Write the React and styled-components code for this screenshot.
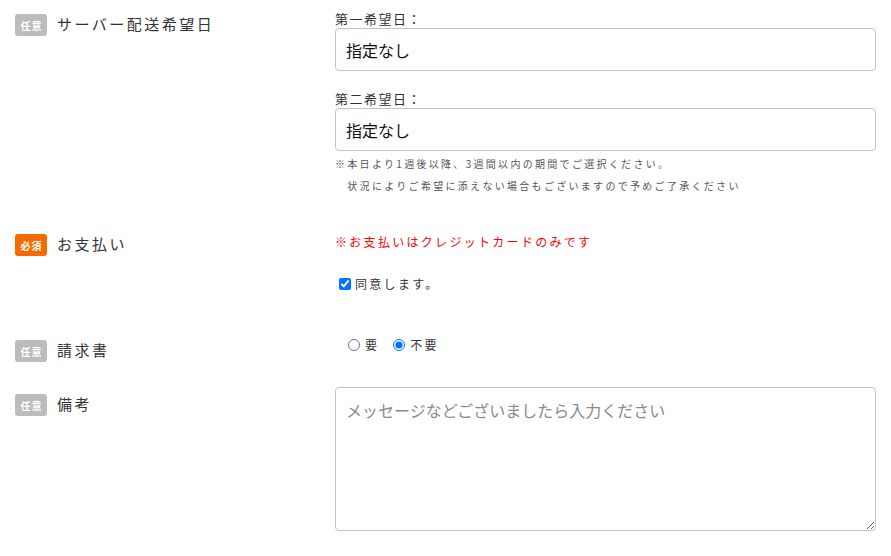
import React from "react";
import styled, { createGlobalStyle } from "styled-components";

const Global = createGlobalStyle`
  html, body { margin: 0; padding: 0; background: #fff; }
  body {
    font-family: "Noto Sans CJK JP", "Noto Sans", sans-serif;
    color: #333;
  }
  * { box-sizing: border-box; }
`;

const Form = styled.div`
  padding: 0 15px;
  width: 891px;
`;

const Row = styled.div`
  display: grid;
  grid-template-columns: 320px 1fr;
  margin-top: ${(p) => p.$top}px;
`;

const LabelCell = styled.div`
  display: flex;
  align-items: center;
  gap: 10px;
  padding-top: ${(p) => p.$pad}px;
  height: fit-content;
`;

const Badge = styled.span`
  display: inline-flex;
  align-items: center;
  justify-content: center;
  width: 32px;
  height: 22px;
  border-radius: 3px;
  background: ${(p) => (p.$required ? "#f56b00" : "#bcbcbc")};
  color: #fff;
  font-size: 10px;
  font-weight: bold;
  letter-spacing: 1px;
  padding-left: 1px;
`;

const LabelText = styled.span`
  font-size: 15px;
  letter-spacing: 2.5px;
  color: #333;
  line-height: 22px;
  margin-top: -3px;
`;

const FieldCell = styled.div`
  padding-top: ${(p) => p.$pad || 0}px;
  display: flex;
  flex-direction: column;
`;

const SubLabel = styled.div`
  font-size: 13px;
  letter-spacing: 1.5px;
  line-height: 18px;
  color: #333;
  margin-top: ${(p) => p.$top || 0}px;
`;

const Select = styled.div`
  height: 43px;
  border: 1px solid #c4c4c4;
  border-radius: 4px;
  padding: 0 10px;
  display: flex;
  align-items: center;
  font-size: 16px;
  color: #111;
`;

const Notes = styled.div`
  margin-top: 2px;
`;

const Note = styled.div`
  font-size: 10px;
  letter-spacing: 2.3px;
  line-height: 22px;
  color: #555;
  white-space: pre;
`;

const Alert = styled.div`
  font-size: 12px;
  letter-spacing: 2.3px;
  line-height: 20px;
  color: #f00;
`;

const CheckLine = styled.label`
  display: flex;
  align-items: center;
  font-size: 12px;
  letter-spacing: 2.3px;
  line-height: 20px;
  color: #333;
  margin-top: ${(p) => p.$top || 0}px;
  input {
    margin: 0 4px 0 4px;
    width: 12px;
    height: 12px;
  }
`;

const RadioGroup = styled.div`
  display: flex;
  align-items: center;
  padding-left: 8px;
  line-height: 20px;
`;

const RadioLabel = styled.label`
  display: flex;
  align-items: center;
  font-size: 12px;
  letter-spacing: 2.3px;
  color: #333;
  margin-right: 9px;
  input {
    margin: 0 5px 0 5px;
    width: 12px;
    height: 12px;
  }
`;

const TextArea = styled.textarea`
  width: 100%;
  height: 144px;
  border: 1px solid #c4c4c4;
  border-radius: 4px;
  padding: 10px;
  font-family: "Noto Sans CJK JP", "Noto Sans", sans-serif;
  font-size: 16px;
  line-height: 24px;
  resize: vertical;
  display: block;
  &::placeholder {
    color: #8a8a8a;
  }
`;

export default function App() {
  return (
    <>
      <Global />
      <Form>
        <Row $top={0}>
          <LabelCell $pad={14}>
            <Badge>任意</Badge>
            <LabelText>サーバー配送希望日</LabelText>
          </LabelCell>
          <FieldCell $pad={10}>
            <SubLabel>第一希望日：</SubLabel>
            <Select>指定なし</Select>
            <SubLabel $top={19}>第二希望日：</SubLabel>
            <Select>指定なし</Select>
            <Notes>
              <Note>※本日より1週後以降、3週間以内の期間でご選択ください。</Note>
              <Note>{"　状況によりご希望に添えない場合もございますので予めご了承ください"}</Note>
            </Notes>
          </FieldCell>
        </Row>
        <Row $top={27}>
          <LabelCell $pad={10}>
            <Badge $required>必須</Badge>
            <LabelText>お支払い</LabelText>
          </LabelCell>
          <FieldCell $pad={8}>
            <Alert>※お支払いはクレジットカードのみです</Alert>
            <CheckLine $top={22}>
              <input type="checkbox" defaultChecked />
              同意します。
            </CheckLine>
          </FieldCell>
        </Row>
        <Row $top={36}>
          <LabelCell $pad={10}>
            <Badge>任意</Badge>
            <LabelText>請求書</LabelText>
          </LabelCell>
          <FieldCell $pad={5}>
            <RadioGroup>
              <RadioLabel>
                <input type="radio" name="invoice" />要
              </RadioLabel>
              <RadioLabel>
                <input type="radio" name="invoice" defaultChecked />不要
              </RadioLabel>
            </RadioGroup>
          </FieldCell>
        </Row>
        <Row $top={25}>
          <LabelCell $pad={7}>
            <Badge>任意</Badge>
            <LabelText>備考</LabelText>
          </LabelCell>
          <FieldCell>
            <TextArea placeholder="メッセージなどございましたら入力ください" />
          </FieldCell>
        </Row>
      </Form>
    </>
  );
}
